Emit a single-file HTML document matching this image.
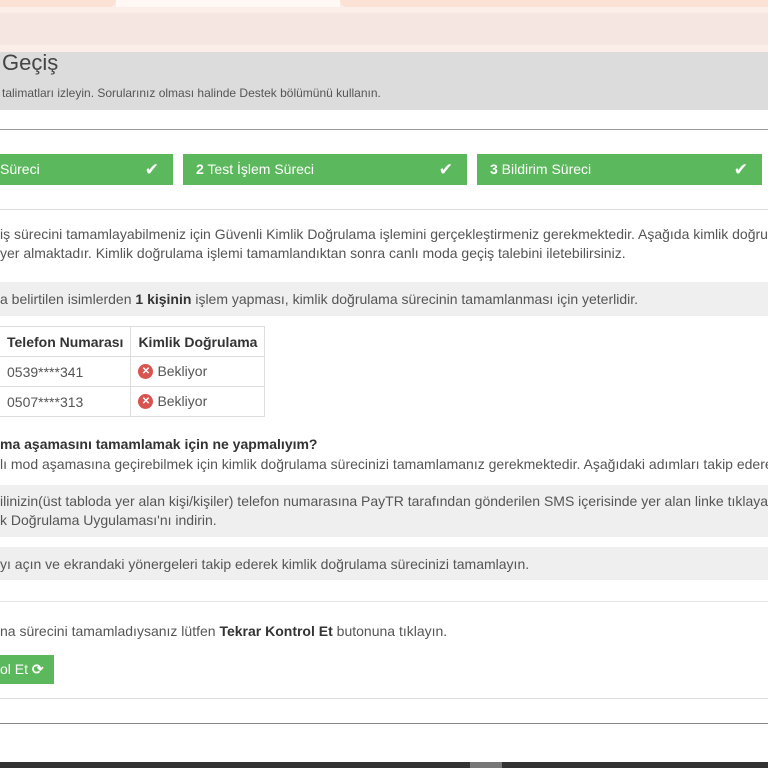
<!DOCTYPE html>
<html><head><meta charset="utf-8"><style>
*{margin:0;padding:0;box-sizing:border-box}
body{width:768px;height:768px;overflow:hidden;position:relative;background:#fff;font-family:"Liberation Sans",sans-serif;color:#555;font-size:14px}
.a{position:absolute;white-space:nowrap}
.t{position:absolute;white-space:nowrap;left:0;line-height:18px}
.band{position:absolute;left:0;width:768px;background:#efefef}
.g{position:absolute;top:154px;height:31px;background:#5cb85c;color:#fff;font-size:14px;line-height:31px}
.g b{font-weight:bold}
.g .c{position:absolute;right:14px;top:0;font-size:17px}
table{position:absolute;left:-1px;top:326px;border-collapse:collapse;font-size:14px;color:#555}
td,th{border:1px solid #ddd;height:30px;padding:0 7px;text-align:left;vertical-align:middle}
th{color:#333}
.x{display:inline-block;width:15px;height:15px;border-radius:50%;background:#d9534f;color:#fff;font-size:10px;line-height:15px;text-align:center;font-weight:bold;vertical-align:middle;margin-right:4px;position:relative;top:-1px}
</style></head><body>
<div class="a" style="left:0;top:0;width:768px;height:52px;background:#fbeee9"></div>
<div class="a" style="left:0;top:0;width:116px;height:7px;background:#fbe2d4;border-radius:0 0 8px 0"></div>
<div class="a" style="left:340px;top:0;width:428px;height:7px;background:#fbe2d4;border-radius:0 0 0 8px"></div>
<div class="a" style="left:116px;top:0;width:224px;height:7px;background:#fff8f5"></div>
<div class="a" style="left:0;top:13px;width:768px;height:32px;background:#f5e6e2"></div>
<div class="a" style="left:0;top:52px;width:768px;height:58px;background:#dcdcdc"></div>
<div class="a" style="left:2px;top:50px;font-size:22px;color:#444">Geçiş</div>
<div class="a" style="left:2px;top:86px;font-size:12px;color:#555">talimatları izleyin. Sorularınız olması halinde Destek bölümünü kullanın.</div>
<div class="a" style="left:0;top:129px;width:768px;height:1px;background:#999"></div>
<div class="g" style="left:0;width:173px;padding-left:0">Süreci<span class="c">✔</span></div>
<div class="g" style="left:183px;width:284px;padding-left:13px"><b>2</b> Test İşlem Süreci<span class="c">✔</span></div>
<div class="g" style="left:477px;width:285px;padding-left:13px"><b>3</b> Bildirim Süreci<span class="c">✔</span></div>
<div class="a" style="left:0;top:209px;width:768px;height:1px;background:#ddd"></div>
<div class="t" style="top:225px">iş sürecini tamamlayabilmeniz için Güvenli Kimlik Doğrulama işlemini gerçekleştirmeniz gerekmektedir. Aşağıda kimlik doğrulama</div>
<div class="t" style="top:244px">yer almaktadır. Kimlik doğrulama işlemi tamamlandıktan sonra canlı moda geçiş talebini iletebilirsiniz.</div>
<div class="band" style="top:282px;height:34px"></div>
<div class="t" style="top:290px">a belirtilen isimlerden <b style="color:#333">1 kişinin</b> işlem yapması, kimlik doğrulama sürecinin tamamlanması için yeterlidir.</div>
<table><tr><th>Telefon Numarası</th><th>Kimlik Doğrulama</th></tr>
<tr><td>0539****341</td><td><span class="x">✕</span>Bekliyor</td></tr>
<tr><td>0507****313</td><td><span class="x">✕</span>Bekliyor</td></tr></table>
<div class="t" style="top:435px;font-weight:bold;color:#333">ma aşamasını tamamlamak için ne yapmalıyım?</div>
<div class="t" style="top:455px">lı mod aşamasına geçirebilmek için kimlik doğrulama sürecinizi tamamlamanız gerekmektedir. Aşağıdaki adımları takip ederek</div>
<div class="band" style="top:485px;height:52px"></div>
<div class="t" style="top:492px">ilinizin(üst tabloda yer alan kişi/kişiler) telefon numarasına PayTR tarafından gönderilen SMS içerisinde yer alan linke tıklayarak</div>
<div class="t" style="top:511px">k Doğrulama Uygulaması'nı indirin.</div>
<div class="band" style="top:547px;height:33px"></div>
<div class="t" style="top:555px">yı açın ve ekrandaki yönergeleri takip ederek kimlik doğrulama sürecinizi tamamlayın.</div>
<div class="a" style="left:0;top:601px;width:768px;height:1px;background:#e5e5e5"></div>
<div class="t" style="top:622px">na sürecini tamamladıysanız lütfen <b style="color:#333">Tekrar Kontrol Et</b> butonuna tıklayın.</div>
<div class="a" style="left:0;top:655px;width:54px;height:29px;background:#5cb85c;color:#fff;line-height:29px;font-size:14px">ol Et <b>⟳</b></div>
<div class="a" style="left:0;top:698px;width:768px;height:1px;background:#ddd"></div>
<div class="a" style="left:0;top:723px;width:768px;height:1px;background:#888"></div>
<div class="a" style="left:0;top:762px;width:768px;height:6px;background:#333"></div>
<div class="a" style="left:470px;top:762px;width:32px;height:6px;background:#777"></div>
</body></html>
